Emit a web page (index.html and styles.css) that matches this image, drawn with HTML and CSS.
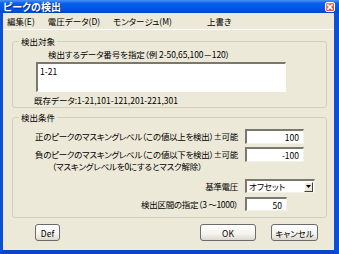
FILE: index.html
```html
<!DOCTYPE html>
<html lang="ja">
<head>
    <meta charset="UTF-8">
    <title>ピークの検出</title>
    <link rel="stylesheet" href="styles.css">
</head>
<body>
    <div class="window">
        <div class="titlebar">
            <span class="title">ピークの検出</span>
            <span class="close">
                <svg width="10" height="10" viewBox="0 0 10 10">
                    <path d="M3 3 L7 7 M7 3 L3 7" stroke="#fff" stroke-width="1.6" stroke-linecap="square"/>
                </svg>
            </span>
        </div>

        <div class="frame">
            <div class="menubar">
                <span class="menu-item">編集(E)</span>
                <span class="menu-item">電圧データ(D)</span>
                <span class="menu-item">モンタージュ(M)</span>
                <span class="menu-item overwrite">上書き</span>
            </div>

            <div class="client">
                <!-- 検出対象 -->
                <fieldset class="group group-target">
                    <legend>検出対象</legend>
                    <div class="hint">検出するデータ番号を指定（例 2-50,65,100－120）</div>
                    <textarea class="numbers">1-21</textarea>
                    <div class="existing">既存データ:1-21,101-121,201-221,301</div>
                </fieldset>

                <!-- 検出条件 -->
                <fieldset class="group group-cond">
                    <legend>検出条件</legend>
                    <div class="row row-first">
                        <label class="row-label">正のピークのマスキングレベル（この値以上を検出）±可能</label>
                        <input class="field field-level" type="text" value="100">
                    </div>
                    <div class="row">
                        <label class="row-label">負のピークのマスキングレベル（この値以下を検出）±可能</label>
                        <input class="field field-level" type="text" value="-100">
                    </div>
                    <div class="note">（マスキングレベルを0にするとマスク解除）</div>
                    <div class="row row-combo">
                        <label class="row-label">基準電圧</label>
                        <div class="combo">
                            <span class="combo-text">オフセット</span>
                            <span class="combo-btn">
                                <svg width="5" height="3" viewBox="0 0 5 3"><path d="M0 0 H5 L2.5 3 Z" fill="#000"/></svg>
                            </span>
                        </div>
                    </div>
                    <div class="row row-last">
                        <label class="row-label">検出区間の指定（3 ～1000）</label>
                        <input class="field field-range" type="text" value="50">
                    </div>
                </fieldset>

                <div class="buttons">
                    <button class="btn btn-def">Def</button>
                    <span class="spacer"></span>
                    <button class="btn btn-ok">OK</button>
                    <button class="btn btn-cancel">キャンセル</button>
                </div>
            </div>
        </div>
    </div>
</body>
</html>
```

FILE: styles.css
```css
body {
    margin: 0;
    padding: 0;
    background-color: #ece9d8;
    font-family: "Noto Sans CJK JP", "Noto Sans", sans-serif;
    font-size: 8.5px;
    font-feature-settings: "palt";
    color: #000;
}

.window {
    width: 339px;
    height: 254px;
    display: flex;
    flex-direction: column;
    overflow: hidden;
}

/* タイトルバー */
.titlebar {
    height: 13px;
    display: flex;
    align-items: center;
    justify-content: space-between;
    padding: 0 4px 0 3px;
    background: linear-gradient(#4a94f6 0%, #0a5fe8 25%, #0055e5 70%, #0046c8 100%);
}

.title {
    color: #fff;
    font-weight: bold;
    font-size: 10px;
    line-height: 13px;
    text-shadow: 1px 1px 0 #0a2a8a;
}

.close {
    width: 10px;
    height: 10px;
    box-sizing: border-box;
    border: 1px solid #fff;
    border-radius: 2px;
    background: linear-gradient(135deg, #f08a66, #d8431c);
    display: flex;
    align-items: center;
    justify-content: center;
}

.close svg {
    display: block;
    margin: -1px;
}

.frame {
    flex: 1;
    display: flex;
    flex-direction: column;
    border-left: 3px solid #0b4fd8;
    border-right: 5px solid #0b4fd8;
    border-bottom: 4px solid #0a46c6;
    background-color: #ece9d8;
}

/* メニュー */
.menubar {
    height: 16px;
    display: flex;
    align-items: center;
    padding-left: 4px;
    border-bottom: 1px solid #fff;
}

.menu-item {
    margin-right: 13px;
    line-height: 16px;
}

.menu-item.overwrite {
    margin-left: 22px;
}

.client {
    flex: 1;
    display: flex;
    flex-direction: column;
}

/* グループボックス */
.group {
    margin: 6px 7px 0 9px;
    padding: 0 0 1px 0;
    border: 1px solid #d0d0bf;
    border-radius: 3px;
    min-width: 0;
}

.group legend {
    margin-left: 6px;
    padding: 0 2px;
    line-height: 11px;
    color: #000;
}

.hint {
    margin: 2px 0 0 35px;
    line-height: 11px;
    letter-spacing: -0.1px;
}

.numbers {
    display: block;
    margin: 2px 0 0 23px;
    width: 250px;
    height: 30px;
    box-sizing: border-box;
    padding: 2px 2px;
    resize: none;
    font: inherit;
    line-height: 11px;
    background: #fff;
    border-style: solid;
    border-width: 2px 1px 1px 2px;
    border-color: #7a786c #fff #fff #7a786c;
    overflow: hidden;
}

.existing {
    margin: 3px 0 0 21px;
    line-height: 11px;
}

.group-cond {
    margin-top: 4px;
    padding-bottom: 6px;
}

.row {
    display: flex;
    align-items: center;
    margin-top: 3px;
}

.row-first {
    margin-top: 6px;
}

.row-combo {
    margin-top: 8px;
}

.row-last {
    margin-top: 4px;
}

.row-label {
    width: 225px;
    text-align: right;
    line-height: 11px;
    white-space: nowrap;
    letter-spacing: -0.3px;
    margin-right: 7px;
}

.note {
    margin-left: 39px;
    line-height: 9px;
    letter-spacing: -0.2px;
}

.field {
    height: 15px;
    box-sizing: border-box;
    padding: 0 4px 0 2px;
    font: inherit;
    text-align: right;
    background: #fff;
    border-style: solid;
    border-width: 2px 1px 1px 2px;
    border-color: #7a786c #f4f2e8 #f4f2e8 #7a786c;
    outline: none;
}

.field-level {
    width: 59px;
}

.field-range {
    width: 42px;
    height: 14px;
}

.combo {
    width: 70px;
    height: 14px;
    box-sizing: border-box;
    display: flex;
    align-items: center;
    justify-content: space-between;
    background: #fff;
    border-style: solid;
    border-width: 2px 1px 1px 2px;
    border-color: #7a786c #f4f2e8 #f4f2e8 #7a786c;
}

.combo-text {
    padding-left: 2px;
    line-height: 11px;
}

.combo-btn {
    width: 9px;
    height: 10px;
    box-sizing: border-box;
    display: flex;
    align-items: center;
    justify-content: center;
    background: #ece9d8;
    border: 1px solid;
    border-color: #fff #404040 #404040 #fff;
    margin-right: 1px;
}

/* ボタン */
.buttons {
    display: flex;
    align-items: center;
    margin: 6px 16px 0 32px;
}

.spacer {
    flex: 1;
}

.btn {
    height: 17px;
    padding: 0;
    font: inherit;
    color: #000;
    border: 1px solid #6b6b6b;
    border-radius: 3px;
    background: linear-gradient(#ffffff 0%, #f4f3ee 60%, #dcd8cc 100%);
    cursor: pointer;
}

.btn-def {
    width: 25px;
}

.btn-ok {
    width: 56px;
    margin-right: 15px;
}

.btn-cancel {
    width: 47px;
}
```
